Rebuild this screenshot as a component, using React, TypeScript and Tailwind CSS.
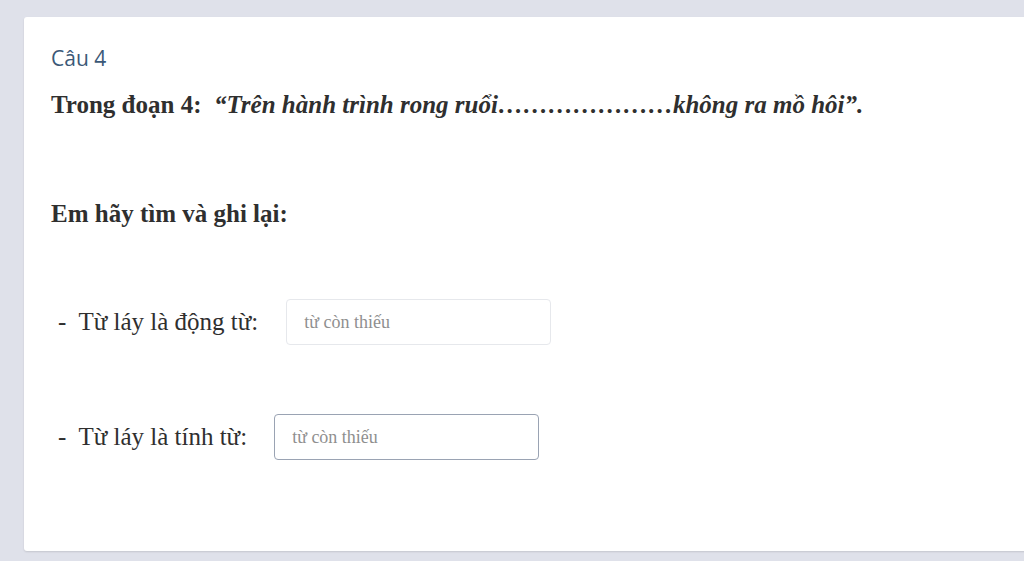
import React from "react";

const rows = [
  { label: "Từ láy là động từ:", focused: false, gap: "ml-[28px]" },
  { label: "Từ láy là tính từ:", focused: true, gap: "ml-[27px]" },
];

export default function App() {
  return (
    <div className="h-[561px] w-[1024px] overflow-hidden bg-[#dfe1ea] pl-6 pt-[17px]">
      <div className="h-[534px] w-[1010px] rounded-[3px] bg-white pl-[27px] pt-[29px] shadow-[0_1px_2px_rgba(0,0,0,0.12)]">
        <div className="font-['Open_Sans',sans-serif] text-[21px] leading-[24px] font-medium text-[#3b5877]">Câu 4</div>
        <p className="mt-[20px] font-['Liberation_Serif',serif] text-[25px] leading-[30px] font-bold text-[#2f2f2f]">
          Trong đoạn 4:&nbsp; <i>“Trên hành trình rong ruổi…………………không ra mồ hôi”.</i>
        </p>
        <p className="mt-[79px] font-['Liberation_Serif',serif] text-[25px] leading-[30px] font-bold text-[#2f2f2f]">
          Em hãy tìm và ghi lại:
        </p>
        <div className="mt-[70px] flex flex-col gap-[69px] pl-[7px]">
          {rows.map((r, i) => (
            <div key={i} className="flex items-center font-['Liberation_Serif',serif] text-[25px] leading-[30px] text-[#2f2f2f]">
              <span className="whitespace-pre">-  {r.label}</span>
              <input
                placeholder="từ còn thiếu"
                className={
                  r.focused
                    ? `${r.gap} h-[46px] w-[265px] rounded-[4px] border border-[#9aa3b3] px-[17px] font-['Liberation_Serif',serif] text-[18px] placeholder:text-[#8f8f8f] outline-none`
                    : `${r.gap} h-[46px] w-[265px] rounded-[4px] border border-[#e6e8ec] px-[17px] font-['Liberation_Serif',serif] text-[18px] placeholder:text-[#8f8f8f] outline-none`
                }
              />
            </div>
          ))}
        </div>
      </div>
    </div>
  );
}
